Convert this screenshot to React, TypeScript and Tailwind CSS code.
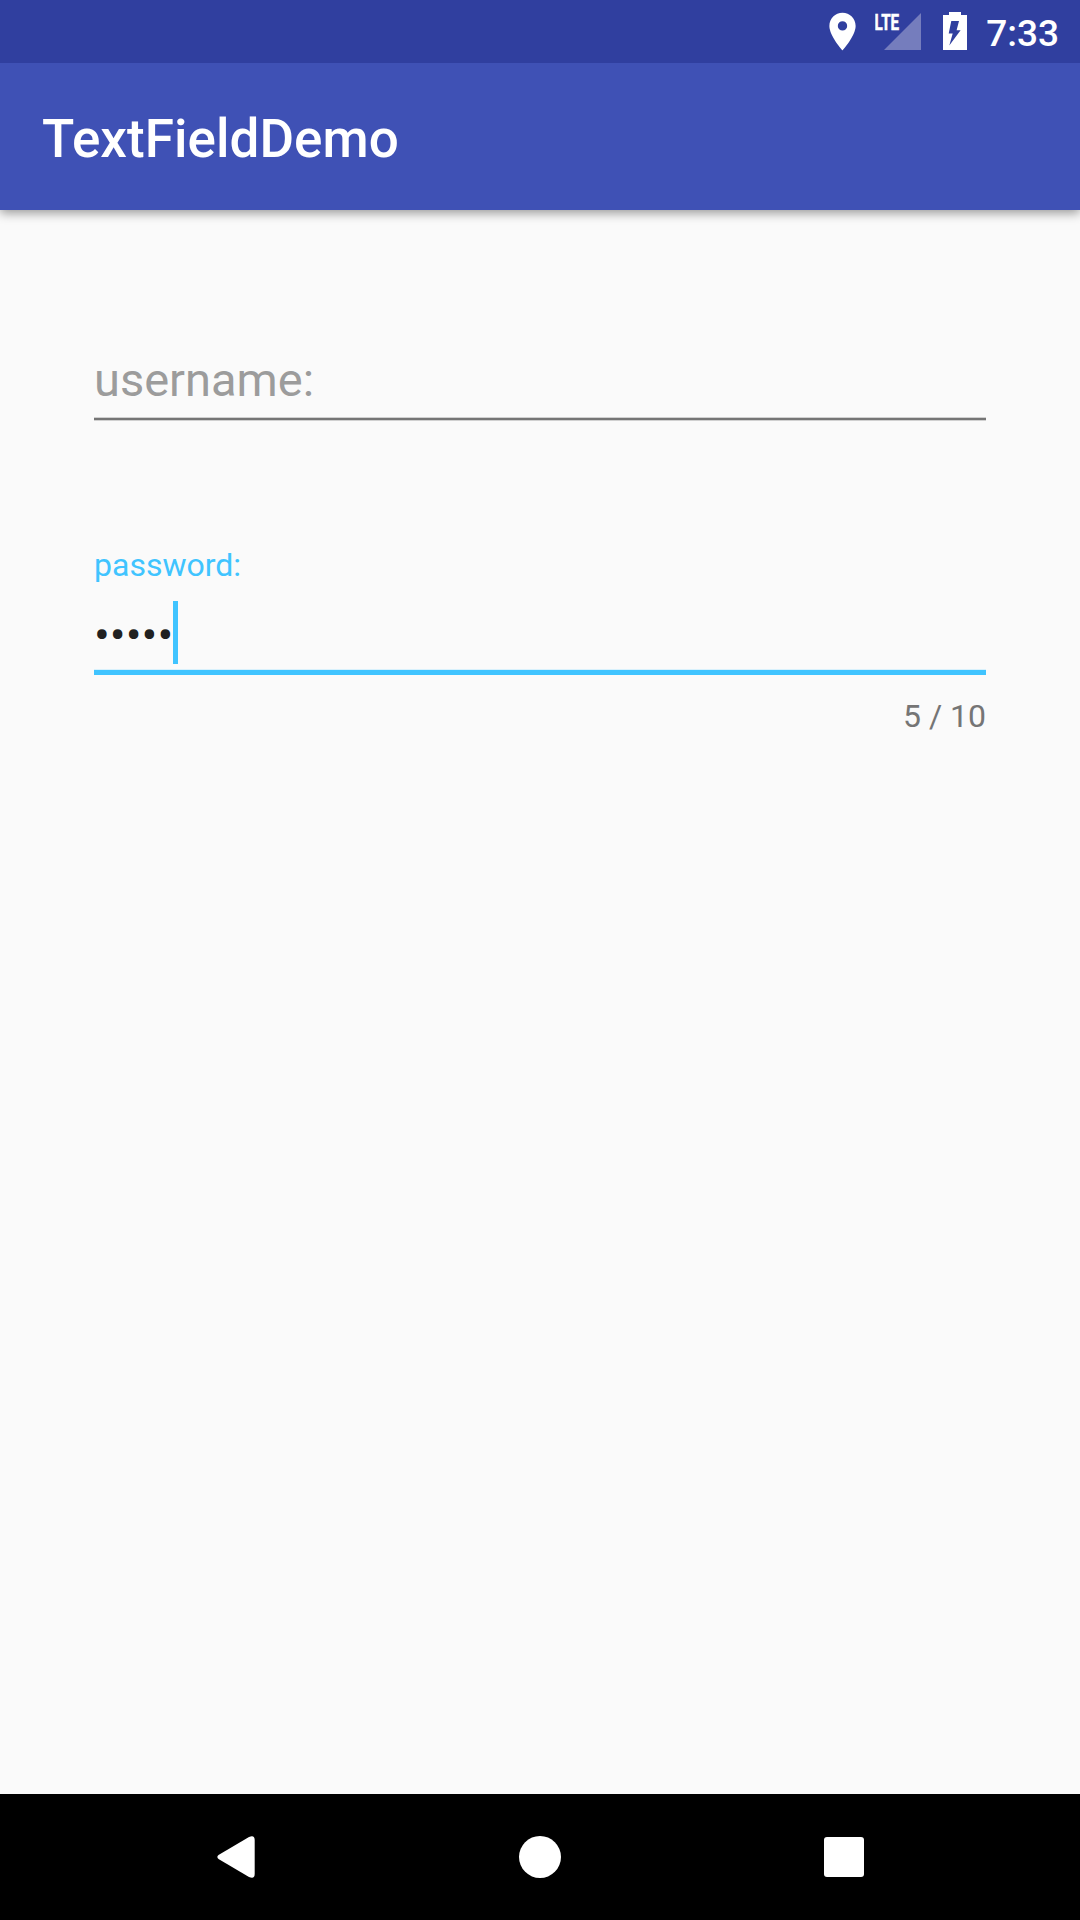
import React from "react";

function StatusBar() {
  return (
    <div className="relative z-10 flex h-[63px] items-start justify-end bg-[#303f9f] text-white">
      <svg className="mr-[10px] mt-[9px] h-[45px] w-[45px]" viewBox="0 0 24 24" fill="currentColor">
        <path d="M12 2C8.13 2 5 5.13 5 9c0 5.25 7 13 7 13s7-7.75 7-13c0-3.87-3.13-7-7-7zm0 9.5a2.5 2.5 0 0 1 0-5 2.5 2.5 0 0 1 0 5z" />
      </svg>
      <svg className="mr-[22px] h-[63px] w-[46px]" viewBox="875 0 46 63">
        <path d="M921 13V50H884Z" fill="#757dbd" />
        <text
          x="874.6"
          y="29.5"
          fontFamily="Roboto"
          fontWeight="700"
          fontSize="21.5"
          textLength="24.5"
          lengthAdjust="spacingAndGlyphs"
          fill="white"
          stroke="white"
          strokeWidth="0.5"
        >
          LTE
        </text>
      </svg>
      <svg className="mr-[19px] h-[63px] w-[24px]" viewBox="943 0 24 63">
        <path d="M949 12H961V15H967V50H943V15H949Z" fill="white" />
        <path d="M951.3 21H959L956.6 30.3H960.6L949.3 45.5L952.7 33.5H948.7Z" fill="#303f9f" />
      </svg>
      <div className="mr-[21px] mt-[12px] text-[37px] font-medium leading-[44px]">7:33</div>
    </div>
  );
}

function AppBar() {
  return (
    <header className="flex h-[147px] items-center bg-[#3f51b5] pl-[42px] pt-[5px] shadow-[0_3px_10px_rgba(0,0,0,0.4)]">
      <h1 className="text-[53px] font-medium leading-[62px] tracking-[0.05px] text-white">TextFieldDemo</h1>
    </header>
  );
}

function NavigationBar() {
  return (
    <nav className="flex h-[126px] items-center bg-black text-white">
      <svg className="ml-[217px] h-[42px] w-[38px]" viewBox="0 0 38 42" fill="currentColor">
        <path d="M1.5 19L32 .9Q37.7-1.5 37.7 4V38Q37.7 43.5 32 41.1L1.5 23Q-.8 21 1.5 19Z" />
      </svg>
      <div className="ml-[264px] h-[42px] w-[42px] rounded-full bg-white" />
      <div className="ml-[263px] h-[40px] w-[40px] rounded-[3px] bg-white" />
    </nav>
  );
}

export default function App() {
  return (
    <div className="flex h-[1920px] w-[1080px] flex-col overflow-hidden bg-[#fafafa] font-[Roboto,sans-serif]">
      <StatusBar />
      <AppBar />
      <main className="flex flex-1 flex-col px-[94px]">
        <div className="mt-[141px] flex h-[70px] flex-col justify-between">
          <span className="text-[47px] leading-[57px] text-[#9c9c9c]">username:</span>
          <div className="h-[4px] border-y border-[#d0d0d0] bg-[#757575]" />
        </div>
        <label className="mt-[125px] text-[32px] leading-[38px] text-[#40c4ff]">password:</label>
        <div className="mt-[16px] flex h-[64px] items-center">
          <span className="pt-[5px] text-[47px] leading-[56px] text-[#212121]">•••••</span>
          <span className="h-[63px] w-[5px] bg-[#40c4ff]" />
        </div>
        <div className="mt-[5px] h-[6px] border-t border-[#d8f1fc] bg-[#40c4ff]" />
        <div className="mt-[22px] text-right text-[32px] leading-[38px] text-[#757575]">5 / 10</div>
      </main>
      <NavigationBar />
    </div>
  );
}
